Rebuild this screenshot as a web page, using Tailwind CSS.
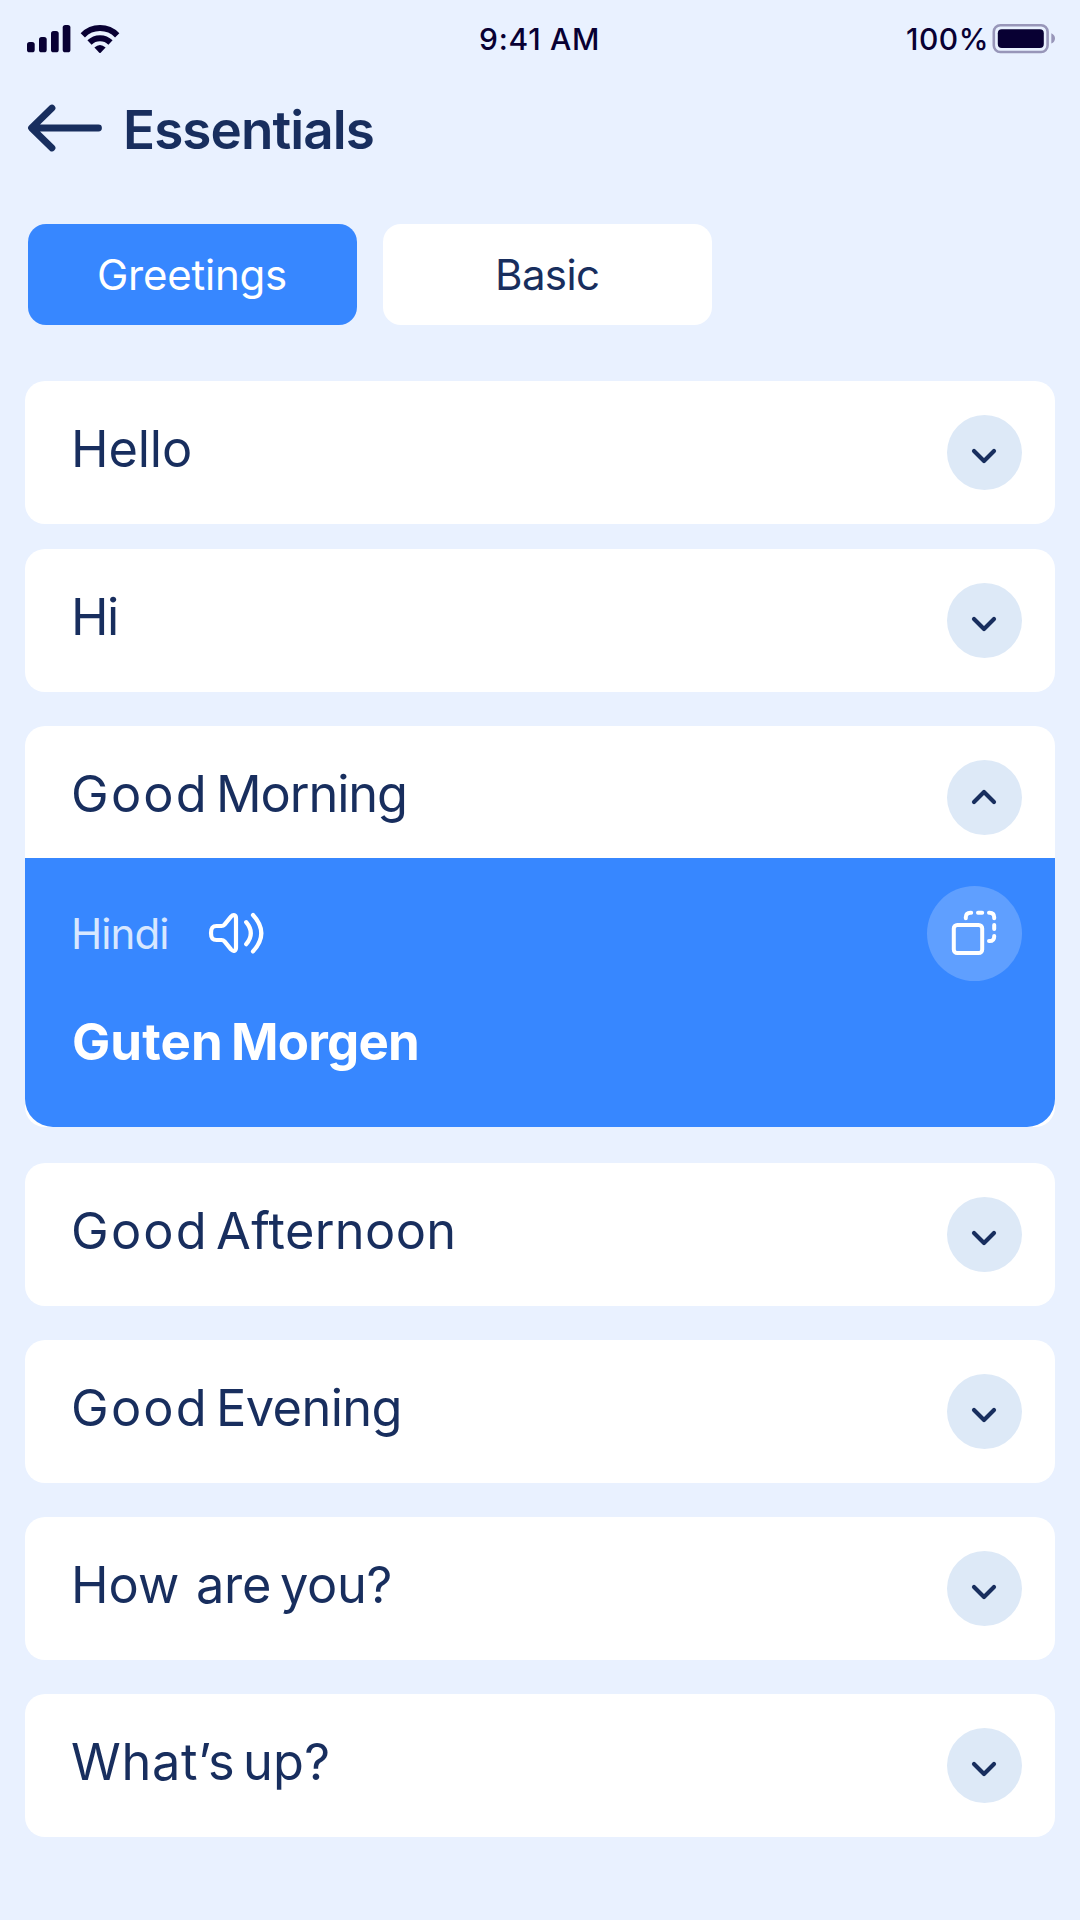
<!DOCTYPE html>
<html lang="en">
<head>
<meta charset="utf-8">
<title>Essentials</title>
<script src="https://cdn.jsdelivr.net/npm/@tailwindcss/browser@4"></script>
</head>
<body class="w-[1080px] h-[1920px] overflow-hidden bg-[#e9f1ff] text-[#182e5e] font-['Inter',sans-serif]">
<svg class="hidden">
  <symbol id="down" viewBox="0 0 75 75"><path d="M27 36L37 46L47 36" fill="none" stroke="#182e5e" stroke-width="4.2" stroke-linecap="round" stroke-linejoin="round"/></symbol>
  <symbol id="up" viewBox="0 0 75 75"><path d="M27 42L37 32L47 42" fill="none" stroke="#182e5e" stroke-width="4.2" stroke-linecap="round" stroke-linejoin="round"/></symbol>
</svg>

<!-- Status bar -->
<div class="flex h-20 pl-[27px] text-[#080033] text-[30px] font-[450] leading-[79px] whitespace-nowrap">
  <svg class="w-[452px] h-20 shrink-0" viewBox="27 0 452 80" fill="#080033">
    <rect x="27" y="42" width="7.7" height="10.3" rx="2.6"/>
    <rect x="39" y="37" width="7.7" height="15.3" rx="2.6"/>
    <rect x="51" y="31" width="7.7" height="21.3" rx="2.6"/>
    <rect x="62.7" y="25" width="7.7" height="27.3" rx="2.6"/>
    <g fill="none" stroke="#080033" stroke-width="6">
      <path d="M82.8 35.3A24 24 0 0 1 117.2 35.3"/>
      <path d="M89.5 42.5A15 15 0 0 1 110.5 42.5"/>
    </g>
    <path d="M94.4 47.4Q100 42.4 105.6 47.4L100.7 52.7Q100 53.4 99.3 52.7Z"/>
  </svg>
  <span class="w-[427px] shrink-0 tracking-[0.75px]">9:41 AM</span>
  <span class="w-[84px] shrink-0 tracking-[0.5px]">100%</span>
  <svg class="w-[70px] h-20 shrink-0" viewBox="990 0 70 80">
    <rect x="993.8" y="25.2" width="53.8" height="26.8" rx="6.5" fill="none" stroke="#9896b9" stroke-width="2.6"/>
    <rect x="997.8" y="29.2" width="46" height="18.9" rx="4" fill="#080033"/>
    <path d="M1051.3 33.3Q1055 35 1055 38.4T1051.3 43.6Z" fill="#9896b9"/>
  </svg>
</div>

<!-- Header -->
<header class="flex h-36 pl-[25px]">
  <svg class="w-[98px] h-24 shrink-0" viewBox="25 80 98 96" fill="none" stroke="#182e5e" stroke-width="6.8" stroke-linecap="round" stroke-linejoin="round"><path d="M52 108L31.5 128L52 148M32 128H98.5"/></svg>
  <h1 class="text-[53px] font-semibold leading-[101px] tracking-[-0.92px]">Essentials</h1>
</header>

<!-- Tabs -->
<div class="flex gap-[26px] pl-7 text-[42px] leading-[102px]">
  <button class="w-[329px] h-[101px] rounded-[18px] bg-[#3787ff] pl-[69px] text-left text-white tracking-[-0.24px]">Greetings</button>
  <button class="w-[329px] h-[101px] rounded-[18px] bg-white pl-28 text-left tracking-[-0.6px]">Basic</button>
</div>

<!-- Phrase list -->
<main class="mt-14 flex flex-col px-[25px] text-[50.5px] leading-[135px] whitespace-nowrap">
  <div class="flex h-[143px] rounded-[20px] bg-white pl-[46px] pr-[33px]">
    <span class="grow tracking-[-0.11px]">Hello</span>
    <svg class="mt-[34px] size-[75px] rounded-full bg-[#dde9f7]"><use href="#down"/></svg>
  </div>
  <div class="mt-[25px] flex h-[143px] rounded-[20px] bg-white pl-[46px] pr-[33px]">
    <span class="grow tracking-[-1.5px]">Hi</span>
    <svg class="mt-[34px] size-[75px] rounded-full bg-[#dde9f7]"><use href="#down"/></svg>
  </div>

  <section class="mt-[34px] h-[401px] rounded-[20px] bg-white">
    <div class="flex h-[132px] pl-[46px] pr-[33px]">
      <span class="w-[145px] tracking-[2.2px]">Good </span>
      <span class="grow tracking-[-1.1px]">Morning</span>
      <svg class="mt-[34px] size-[75px] rounded-full bg-[#dde9f7]"><use href="#up"/></svg>
    </div>
    <div class="h-[269px] rounded-b-[28px] bg-[#3787ff] pl-[46px] pr-[33px] pt-7 text-white">
      <div class="flex h-[95px] text-[42px] leading-[96px]">
        <span class="w-[136px] text-[#d7e7ff] tracking-[-0.9px]">Hindi</span>
        <svg class="mt-[22px] h-[50px] w-[60px]" viewBox="207 908 60 50" fill="none" stroke="#fff" stroke-width="4.2" stroke-linecap="round" stroke-linejoin="round">
          <path d="M211 933C211 927.5 213 926 216.5 926H221.5Q223.3 926 224.5 924.6L231 916.6C233.5 914 236 915 236 918.5V947.5C236 951 233.5 952 231 949.4L224.5 941.4Q223.3 940 221.5 940H216.5C213 940 211 938.5 211 933Z"/>
          <path d="M246.2 922.2Q255.4 933.2 246.2 944.2M253 915Q269.6 933.2 253 951.4"/>
        </svg>
        <svg class="ml-auto size-[95px] rounded-full bg-[#5f9fff]" viewBox="927 886 95 95" fill="none" stroke="#fff" stroke-width="4" stroke-linecap="round" stroke-linejoin="round">
          <rect x="953.8" y="925" width="28.4" height="28" rx="3.5"/>
          <path d="M965.8 918.3V917.3Q965.8 912.7 970.4 912.7H971.2M978 912.7H982.2M989 912.7H989.6Q994.2 912.7 994.2 917.3V918.3M994.2 925V929M994.2 936V936.4Q994.2 941 989.6 941H989"/>
        </svg>
      </div>
      <div class="flex pl-px text-[51px] font-bold leading-[121px]">
        <span class="w-[159px] tracking-[0.1px]">Guten </span><span class="tracking-[-0.78px]">Morgen</span>
      </div>
    </div>
  </section>

  <div class="mt-9 flex h-[143px] rounded-[20px] bg-white pl-[46px] pr-[33px]">
    <span class="w-[145px] tracking-[2.2px]">Good </span>
    <span class="grow tracking-[0.35px]">Afternoon</span>
    <svg class="mt-[34px] size-[75px] rounded-full bg-[#dde9f7]"><use href="#down"/></svg>
  </div>
  <div class="mt-[34px] flex h-[143px] rounded-[20px] bg-white pl-[46px] pr-[33px]">
    <span class="w-[145px] tracking-[2.2px]">Good </span>
    <span class="grow tracking-[-0.6px]">Evening</span>
    <svg class="mt-[34px] size-[75px] rounded-full bg-[#dde9f7]"><use href="#down"/></svg>
  </div>
  <div class="mt-[34px] flex h-[143px] rounded-[20px] bg-white pl-[46px] pr-[33px]">
    <span class="w-[125px]">How </span>
    <span class="w-[84px] tracking-[-0.27px]">are </span>
    <span class="grow tracking-[-0.35px]">you?</span>
    <svg class="mt-[34px] size-[75px] rounded-full bg-[#dde9f7]"><use href="#down"/></svg>
  </div>
  <div class="mt-[34px] flex h-[143px] rounded-[20px] bg-white pl-[46px] pr-[33px]">
    <span class="w-[172px] tracking-[0.64px]">What’s </span>
    <span class="grow tracking-[0.2px]">up?</span>
    <svg class="mt-[34px] size-[75px] rounded-full bg-[#dde9f7]"><use href="#down"/></svg>
  </div>
</main>
</body>
</html>
